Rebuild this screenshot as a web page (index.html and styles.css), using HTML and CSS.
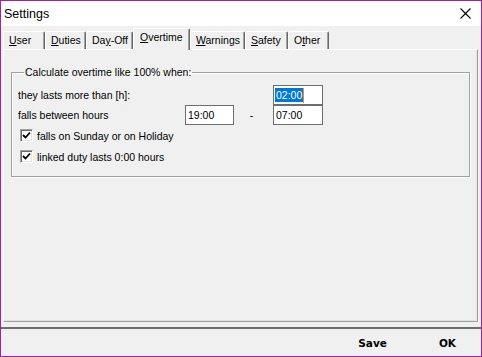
FILE: index.html
```html
<!DOCTYPE html>
<html>
<head>
    <title>Settings</title>
    <link rel="stylesheet" href="styles.css">
</head>
<body>
    <div class="window">
        <div class="titlebar">
            <span class="title">Settings</span>
            <svg class="close" width="11" height="11" viewBox="0 0 11 11">
                <path d="M0.5 0.5 L10.5 10.5 M10.5 0.5 L0.5 10.5" stroke="#000" stroke-width="1.1" fill="none"/>
            </svg>
        </div>

        <div class="tabs">
            <div class="tab tab-user"><u>U</u>ser</div>
            <div class="tab tab-duties"><u>D</u>uties</div>
            <div class="tab tab-dayoff">Da<u>y</u>-Off</div>
            <div class="tab tab-overtime tab-active"><u>O</u>vertime</div>
            <div class="tab tab-warnings"><u>W</u>arnings</div>
            <div class="tab tab-safety"><u>S</u>afety</div>
            <div class="tab tab-other">O<u>t</u>her</div>
        </div>

        <div class="panel">
            <fieldset class="group">
                <legend>Calculate overtime like 100% when:</legend>
                <div class="grid">
                    <span class="label">they lasts more than [h]:</span>
                    <span class="field field-end"><span class="selected">02:00</span><span class="caret"></span></span>
                    <span class="label">falls between hours</span>
                    <span class="field">19:00</span>
                    <span class="dash">-</span>
                    <span class="field">07:00</span>
                </div>
                <div class="check-row">
                    <span class="check">
                        <svg width="9" height="9" viewBox="0 0 9 9"><path d="M1 4 L3.5 6.5 L8 1.5" stroke="#000" stroke-width="1.8" fill="none"/></svg>
                    </span>
                    falls on Sunday or on Holiday
                </div>
                <div class="check-row">
                    <span class="check">
                        <svg width="9" height="9" viewBox="0 0 9 9"><path d="M1 4 L3.5 6.5 L8 1.5" stroke="#000" stroke-width="1.8" fill="none"/></svg>
                    </span>
                    linked duty lasts 0:00 hours
                </div>
            </fieldset>
        </div>

        <div class="footer">
            <span class="btn">Save</span>
            <span class="btn">OK</span>
        </div>
    </div>
</body>
</html>
```

FILE: styles.css
```css
body {
    margin: 0;
    padding: 0;
    font-family: "Liberation Sans", Arial, sans-serif;
    font-size: 10.5px;
    color: #000;
}

.window {
    width: 482px;
    height: 357px;
    box-sizing: border-box;
    border: 1px solid #a5209f;
    background-color: #f0f0f0;
    display: flex;
    flex-direction: column;
}

.titlebar {
    height: 25px;
    background-color: #ffffff;
    display: flex;
    align-items: center;
    justify-content: space-between;
    padding-left: 3px;
}

.title {
    font-size: 12.5px;
}

.close {
    margin-right: 10px;
}

/* tab strip */
.tabs {
    height: 23px;
    display: flex;
    align-items: flex-end;
    padding-left: 2px;
}

.tab {
    height: 18px;
    box-sizing: border-box;
    padding-left: 5px;
    line-height: 17px;
    white-space: nowrap;
    overflow: hidden;
    border-top: 1px solid #ffffff;
    border-left: 1px solid #ffffff;
    border-right: 1px solid #696969;
    box-shadow: inset -1px 0 0 #a0a0a0;
    border-radius: 2px 2px 0 0;
}

.tab-user { width: 42px; }
.tab-duties { width: 41px; }
.tab-dayoff { width: 47px; }
.tab-overtime { width: 57px; }
.tab-warnings { width: 55px; }
.tab-safety { width: 43px; }
.tab-other { width: 41px; }

.tab-active {
    height: 22px;
    margin-bottom: -1px;
    padding-left: 6px;
    line-height: 16px;
    background-color: #f0f0f0;
    position: relative;
    z-index: 1;
}

.panel {
    height: 273px;
    box-sizing: border-box;
    margin: 0 3px 0 2px;
    border: 1px solid;
    border-color: #ffffff #a0a0a0 #a0a0a0 #ffffff;
    box-shadow: inset -1px -1px 0 #e3e3e3;
    padding-top: 16px;
}

.group {
    margin: 0 7px;
    padding: 0 6px 9px 6px;
    border: 1px solid #a0a0a0;
    box-shadow: inset 1px 1px 0 #ffffff, 1px 1px 0 #ffffff;
}

.group legend {
    padding: 0 1px;
    margin-left: 6px;
    line-height: 12px;
}

.grid {
    display: grid;
    grid-template-columns: 167px 49px 39px 50px;
    grid-auto-rows: 20px;
    align-items: center;
    margin-top: 7px;
}

.field {
    height: 20px;
    box-sizing: border-box;
    border: 1px solid #6e6e6e;
    background-color: #ffffff;
    padding: 0 2px;
    line-height: 18px;
    display: flex;
    align-items: center;
}

.field-end {
    grid-column: 4;
    padding-left: 1px;
}

.selected {
    background-color: #0078d7;
    color: #ffffff;
    line-height: 14px;
    padding: 0 1px;
}

.caret {
    width: 1px;
    height: 15px;
    background-color: #ff8c00;
}

.dash {
    text-align: center;
    padding-right: 4px;
}

.check-row {
    height: 21px;
    display: flex;
    align-items: center;
}

.check {
    width: 13px;
    height: 13px;
    box-sizing: border-box;
    margin: 0 4px 0 2px;
    border: 1px solid;
    border-color: #a0a0a0 #ffffff #ffffff #a0a0a0;
    box-shadow: inset 1px 1px 0 #696969, inset -1px -1px 0 #e3e3e3;
    background-color: #ffffff;
    display: flex;
    align-items: center;
    justify-content: center;
}

.footer {
    flex: 1;
    margin-top: 5px;
    border-top: 2px solid #6d6d6d;
    display: flex;
    align-items: center;
    justify-content: flex-end;
    gap: 52px;
    padding-right: 25px;
}

.btn {
    font-family: "DejaVu Sans", sans-serif;
    font-weight: bold;
    font-size: 10.5px;
}
```
